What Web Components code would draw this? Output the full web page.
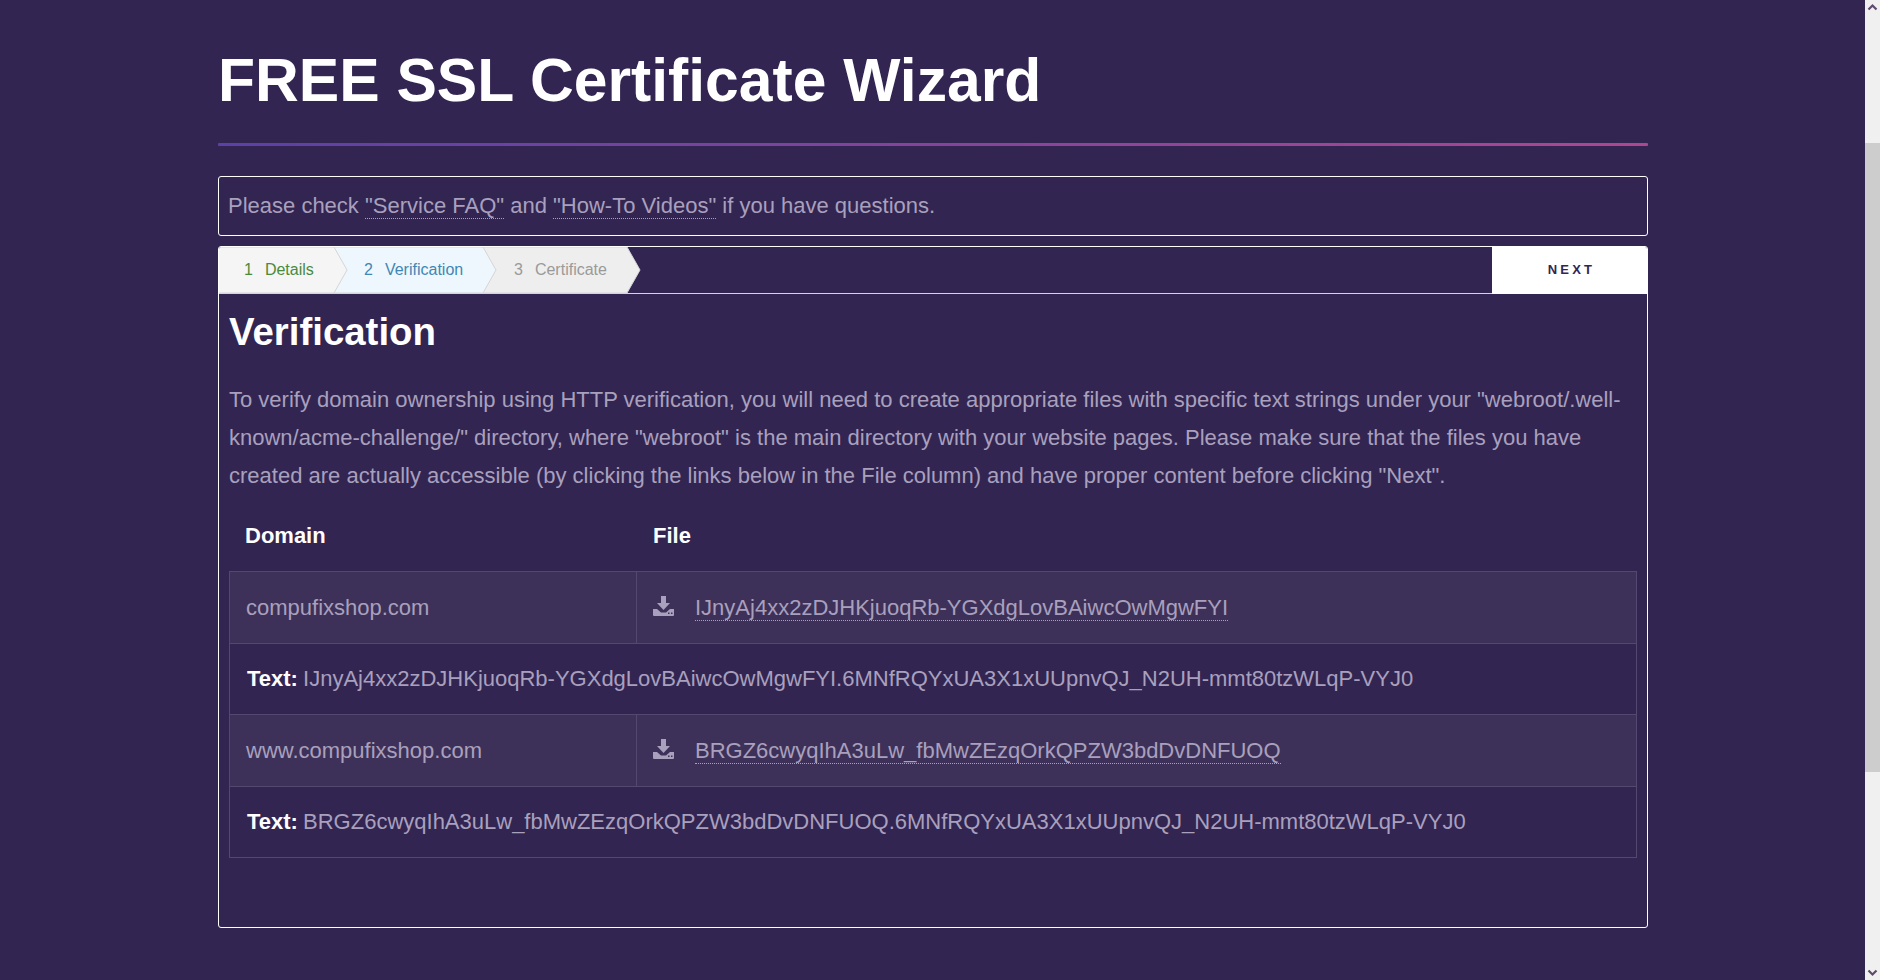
<!DOCTYPE html>
<html>
<head>
<meta charset="utf-8">
<title>FREE SSL Certificate Wizard</title>
<style>
html, body { margin: 0; height: 100%; overflow: hidden; background: #322552; }
body { font-family: "Liberation Sans", Arial, sans-serif; }
</style>
</head>
<body>
<ssl-page>
    <h-title slot="title">FREE SSL Certificate Wizard</h-title>
    <notice-box slot="notice">Please check <dot-link>"Service FAQ"</dot-link> and <dot-link>"How-To Videos"</dot-link> if you have questions.</notice-box>
    <wizard-panel slot="panel">
        <step-tab slot="steps" num="1" state="done">Details</step-tab>
        <step-tab slot="steps" num="2" state="active">Verification</step-tab>
        <step-tab slot="steps" num="3" state="todo">Certificate</step-tab>
        <next-button slot="next">NEXT</next-button>

        <h2 style="margin:0;font-size:38.4px;line-height:38px;color:#fff;font-weight:700;padding:19px 0 0 0">Verification</h2>
        <p style="margin:0;padding:30px 0 0 0;font-size:22px;line-height:37.8px;color:#a9a0bd">To verify domain ownership using HTTP verification, you will need to create appropriate files with specific text strings under your "webroot/.well-known/acme-challenge/" directory, where "webroot" is the main directory with your website pages. Please make sure that the files you have created are actually accessible (by clicking the links below in the File column) and have proper content before clicking "Next".</p>

        <file-table>
            <file-row domain="compufixshop.com" file="IJnyAj4xx2zDJHKjuoqRb-YGXdgLovBAiwcOwMgwFYI" text="IJnyAj4xx2zDJHKjuoqRb-YGXdgLovBAiwcOwMgwFYI.6MNfRQYxUA3X1xUUpnvQJ_N2UH-mmt80tzWLqP-VYJ0"></file-row>
            <file-row domain="www.compufixshop.com" file="BRGZ6cwyqIhA3uLw_fbMwZEzqOrkQPZW3bdDvDNFUOQ" text="BRGZ6cwyqIhA3uLw_fbMwZEzqOrkQPZW3bdDvDNFUOQ.6MNfRQYxUA3X1xUUpnvQJ_N2UH-mmt80tzWLqP-VYJ0"></file-row>
        </file-table>
    </wizard-panel>
</ssl-page>

<script>
// small helper so every class below stays short
function shadow(el, html) {
    el.attachShadow({ mode: 'open' }).innerHTML = html;
}

class SslPage extends HTMLElement {
    connectedCallback() {
        shadow(this, `
            <style>
                :host { display: flex; height: 980px; background: #322552; }
                .main { flex: 1; display: flex; padding-left: 218px; min-width: 0; }
                .wrap { width: 1430px; display: flex; flex-direction: column; }
                .bar { width: 15px; background: #f0f0f0; display: flex; flex-direction: column; align-items: center; }
                .bar svg { display: block; width: 15px; height: 15px; flex: none; }
                .thumb { background: #cdcdcd; height: 629px; margin-top: 128px; width: 15px; }
                .fill { flex: 1; }
            </style>
            <div class="main"><div class="wrap">
                <slot name="title"></slot>
                <slot name="notice"></slot>
                <slot name="panel"></slot>
            </div></div>
            <div class="bar">
                <svg viewBox="0 0 15 15"><path d="M3.500 9.500 7.500 5.500 11.500 9.500" fill="none" stroke="#5f4a6e" stroke-width="2.200"/></svg>
                <div class="thumb"></div>
                <div class="fill"></div>
                <svg viewBox="0 0 15 15"><path d="M3.500 5.500 7.500 9.500 11.500 5.500" fill="none" stroke="#5f4a6e" stroke-width="2.200"/></svg>
            </div>
        `);
    }
}

class HTitle extends HTMLElement {
    connectedCallback() {
        shadow(this, `
            <style>
                :host { display: block; padding-top: 45px; }
                h1 { margin: 0; font-size: 60.6px; line-height: 70px; color: #fff; font-weight: 700; }
                .line { height: 3px; margin-top: 28px; border-radius: 1px; background: linear-gradient(90deg, #5b41a6, #ad4791); }
            </style>
            <h1><slot></slot></h1>
            <div class="line"></div>
        `);
    }
}

class NoticeBox extends HTMLElement {
    connectedCallback() {
        shadow(this, `
            <style>
                :host {
                    display: block; box-sizing: border-box; height: 60px; margin-top: 30px;
                    border: 1px solid #fff; border-radius: 3px; padding: 0 9px;
                    font-size: 22px; line-height: 58px; color: #a9a0bd;
                }
            </style>
            <slot></slot>
        `);
    }
}

class DotLink extends HTMLElement {
    connectedCallback() {
        shadow(this, `<style>:host { display: inline; border-bottom: 1px dotted #a9a0bd; }</style><slot></slot>`);
    }
}

class WizardPanel extends HTMLElement {
    connectedCallback() {
        shadow(this, `
            <style>
                :host {
                    display: block; box-sizing: border-box; height: 682px; margin-top: 10px;
                    border: 1px solid #fff; border-radius: 3px; overflow: hidden;
                }
                .top { display: flex; justify-content: space-between; height: 47px; box-sizing: border-box; border-bottom: 1px solid #d5d5d5; }
                .steps { display: flex; }
                .body { padding: 0 10px; }
            </style>
            <div class="top">
                <div class="steps"><slot name="steps"></slot></div>
                <slot name="next"></slot>
            </div>
            <div class="body"><slot></slot></div>
        `);
    }
}

const STEP_COLORS = {
    done: { bg: '#f5f5f5', fg: '#4a8a3d', w: 115, z: 3, pad: 25 },
    active: { bg: '#eef7fd', fg: '#3f87b5', w: 149, z: 2, pad: 30 },
    todo: { bg: '#eeeeee', fg: '#9a9a9a', w: 144, z: 1, pad: 31 }
};

class StepTab extends HTMLElement {
    connectedCallback() {
        const c = STEP_COLORS[this.getAttribute('state')];
        const w = c.w, h = 46;
        shadow(this, `
            <style>
                :host { display: block; position: relative; z-index: ${c.z}; height: 46px; width: ${w}px; color: ${c.fg}; font-size: 16px; line-height: 46px; }
                svg { position: absolute; left: -1px; top: 0; }
                .lbl { position: relative; display: flex; gap: 12px; padding-left: ${c.pad}px; }
            </style>
            <svg width="${w + 15}" height="${h}">
                <path d="M0 0H${w + 1}L${w + 14} ${h / 2}L${w + 1} ${h}H0Z" fill="${c.bg}" stroke="#d5d5d5"/>
            </svg>
            <div class="lbl"><span>${this.getAttribute('num')}</span><span><slot></slot></span></div>
        `);
    }
}

class NextButton extends HTMLElement {
    connectedCallback() {
        shadow(this, `
            <style>
                :host {
                    display: block; width: 155px; height: 47px; background: #fff; color: #322552; text-align: center;
                    font-size: 13px; font-weight: 700; line-height: 45px; letter-spacing: 3.200px; padding-left: 4px; box-sizing: border-box;
                }
            </style>
            <slot></slot>
        `);
    }
}

class FileTable extends HTMLElement {
    connectedCallback() {
        shadow(this, `
            <style>
                :host { display: block; margin-top: 10px; }
                .head { display: grid; grid-template-columns: 408px 1fr; height: 67px; padding-bottom: 3px; box-sizing: border-box; align-items: center; font-size: 22px; font-weight: 700; color: #fff; }
                .head span { padding-left: 16px; }
                .rows { border: 1px solid #54486f; border-bottom: 0; }
            </style>
            <div class="head"><span>Domain</span><span>File</span></div>
            <div class="rows"><slot></slot></div>
        `);
    }
}

class FileRow extends HTMLElement {
    connectedCallback() {
        shadow(this, `
            <style>
                :host { display: block; font-size: 22px; color: #a9a0bd; }
                .a { display: grid; grid-template-columns: 406px 1fr; height: 71px; background: #3e3159; border-bottom: 1px solid #54486f; }
                .a > div { display: flex; align-items: center; padding-left: 16px; }
                .a > div + div { border-left: 1px solid #54486f; padding-left: 16px; }
                .b { height: 70px; line-height: 70px; border-bottom: 1px solid #54486f; padding-left: 17px; }
                .b b { color: #fff; margin-right: -1px; }
                svg { width: 21px; height: 20px; margin-right: 21px; margin-top: -3px; flex: none; }
                .file { border-bottom: 1px dotted #a9a0bd; line-height: 24px; margin-top: 1px; }
            </style>
            <div class="a">
                <div>${this.getAttribute('domain')}</div>
                <div>
                    <svg viewBox="0 0 21 20"><path fill="#a9a0bd" d="M8 0h5v7h4l-6.500 7L4 7h4zM0 13h4l4 3.500h5l4-3.500h4v6a1 1 0 0 1-1 1H1a1 1 0 0 1-1-1z"/><rect x="15" y="16.500" width="1.500" height="1.500" fill="#3e3159"/><rect x="18" y="16.500" width="1.500" height="1.500" fill="#3e3159"/></svg>
                    <span class="file">${this.getAttribute('file')}</span>
                </div>
            </div>
            <div class="b"><b>Text:</b> ${this.getAttribute('text')}</div>
        `);
    }
}

customElements.define('ssl-page', SslPage);
customElements.define('h-title', HTitle);
customElements.define('notice-box', NoticeBox);
customElements.define('dot-link', DotLink);
customElements.define('wizard-panel', WizardPanel);
customElements.define('step-tab', StepTab);
customElements.define('next-button', NextButton);
customElements.define('file-table', FileTable);
customElements.define('file-row', FileRow);
</script>
</body>
</html>
